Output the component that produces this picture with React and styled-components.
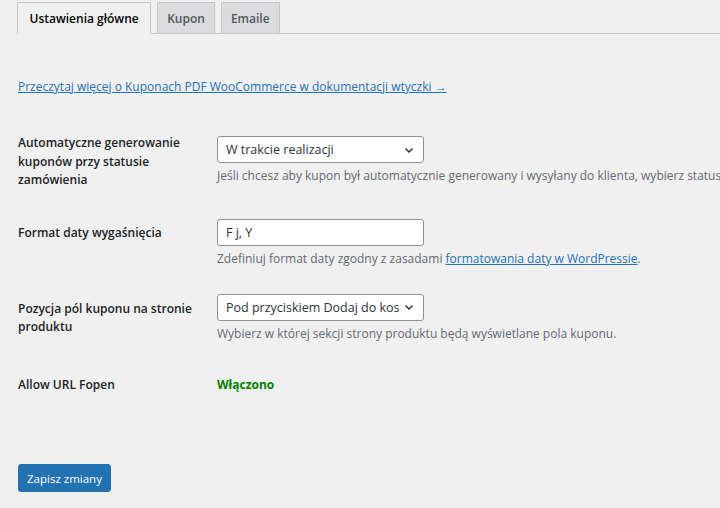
import styled, { createGlobalStyle } from "styled-components";

const Global = createGlobalStyle`
  html, body {
    margin: 0;
    padding: 0;
    background: #f0f0f1;
    overflow: hidden;
  }
  body {
    font-family: "Open Sans", "Noto Sans", sans-serif;
    font-size: 12px;
    color: #1d2327;
  }
`;

const Page = styled.div`
  width: 900px;
  height: 508px;
  padding: 2px 0 0 0;
  box-sizing: border-box;
`;

const TabBar = styled.div`
  display: flex;
  align-items: flex-end;
  gap: 6px;
  margin-left: 17px;
  border-bottom: 1px solid #c3c4c7;
  height: 31px;
`;

const Tab = styled.div`
  box-sizing: border-box;
  height: ${(p) => (p.$active ? "32px" : "31px")};
  margin-bottom: ${(p) => (p.$active ? "-1px" : "0")};
  padding: 0 ${(p) => (p.$active ? "11.5px" : "9px")};
  display: flex;
  align-items: center;
  border: 1px solid #c3c4c7;
  border-bottom: ${(p) => (p.$active ? "1px solid #f0f0f1" : "none")};
  background: ${(p) => (p.$active ? "#f0f0f1" : "#dcdcde")};
  color: ${(p) => (p.$active ? "#000" : "#50575e")};
  font-size: 12px;
  font-weight: 600;
`;

const Content = styled.div`
  padding-left: 18px;
`;

const DocLink = styled.a`
  display: block;
  margin-top: 44px;
  line-height: 18px;
  color: #2271b1;
  text-decoration: underline;
`;

const Row = styled.div`
  display: grid;
  grid-template-columns: 199px 1fr;
  margin-top: ${(p) => p.$top}px;
`;

const Label = styled.div`
  padding-top: ${(p) => p.$offset || 0}px;
  font-weight: 600;
  line-height: 18.5px;
  width: 180px;
`;

const Field = styled.div`
  padding-top: ${(p) => p.$offset || 0}px;
  display: flex;
  flex-direction: column;
  align-items: flex-start;
`;

const SelectBox = styled.div`
  box-sizing: border-box;
  width: 207px;
  height: 27px;
  display: flex;
  align-items: center;
  gap: 4px;
  padding: 0 8px 0 8px;
  background: #fff;
  border: 1px solid #8c8f94;
  border-radius: 3px;
  color: #2c3338;
  font-size: 12.5px;
`;

const SelectText = styled.span`
  flex: 1;
  overflow: hidden;
  white-space: nowrap;
`;

const TextInput = styled.div`
  box-sizing: border-box;
  width: 207px;
  height: 27px;
  display: flex;
  align-items: center;
  padding: 0 8px;
  background: #fff;
  border: 1px solid #8c8f94;
  border-radius: 3px;
  color: #2c3338;
  font-size: 12.5px;
`;

const Desc = styled.p`
  margin: 4px 0 0 0;
  line-height: 18px;
  color: #646970;
  white-space: nowrap;
  a {
    color: #2271b1;
    text-decoration: underline;
  }
`;

const Enabled = styled.span`
  color: #008000;
  font-weight: 700;
  line-height: 18.5px;
`;

const SaveButton = styled.button`
  margin-top: 70px;
  height: 28px;
  padding: 0 8px;
  background: #2271b1;
  border: 1px solid #2271b1;
  border-radius: 3px;
  color: #fff;
  font-family: inherit;
  font-size: 11.5px;
`;

const Chevron = () => (
  <svg width="12" height="12" viewBox="0 0 12 12">
    <path d="M2.5 4.5 L6 8 L9.5 4.5" fill="none" stroke="#2c3338" strokeWidth="1.5" />
  </svg>
);

export default function App() {
  return (
    <>
      <Global />
      <Page>
        <TabBar>
          <Tab $active>Ustawienia główne</Tab>
          <Tab>Kupon</Tab>
          <Tab>Emaile</Tab>
        </TabBar>
        <Content>
          <DocLink href="#">
            Przeczytaj więcej o Kuponach PDF WooCommerce w dokumentacji wtyczki →
          </DocLink>

          <Row $top={38}>
            <Label>Automatyczne generowanie kuponów przy statusie zamówienia</Label>
            <Field $offset={2}>
              <SelectBox>
                <SelectText>W trakcie realizacji</SelectText>
                <Chevron />
              </SelectBox>
              <Desc>
                Jeśli chcesz aby kupon był automatycznie generowany i wysyłany do klienta, wybierz status zamówienia.
              </Desc>
            </Field>
          </Row>

          <Row $top={29}>
            <Label $offset={5}>Format daty wygaśnięcia</Label>
            <Field>
              <TextInput>F j, Y</TextInput>
              <Desc>
                Zdefiniuj format daty zgodny z zasadami <a href="#">formatowania daty w WordPressie</a>.
              </Desc>
            </Field>
          </Row>

          <Row $top={26}>
            <Label $offset={6}>Pozycja pól kuponu na stronie produktu</Label>
            <Field>
              <SelectBox>
                <SelectText>Pod przyciskiem Dodaj do koszyka</SelectText>
                <Chevron />
              </SelectBox>
              <Desc>Wybierz w której sekcji strony produktu będą wyświetlane pola kuponu.</Desc>
            </Field>
          </Row>

          <Row $top={33}>
            <Label>Allow URL Fopen</Label>
            <Field>
              <Enabled>Włączono</Enabled>
            </Field>
          </Row>

          <SaveButton>Zapisz zmiany</SaveButton>
        </Content>
      </Page>
    </>
  );
}
